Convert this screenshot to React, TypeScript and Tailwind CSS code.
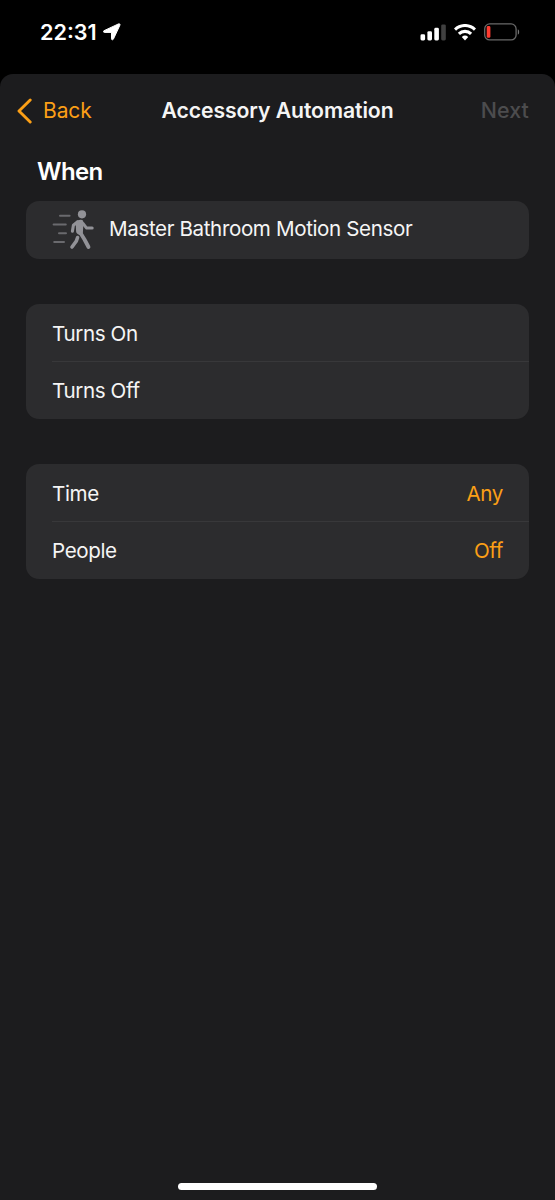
import React from "react";

function StatusBar() {
  return (
    <header className="flex h-[74px] shrink-0 items-start justify-between pl-[40px] pr-[35px] pt-[19px] text-white">
      <div className="flex h-[26px] items-center">
        <span className="w-[63px] whitespace-nowrap text-[21.6px] font-semibold leading-[26px] tracking-[0px]">22:31</span>
        <svg className="h-[18px] w-[18px]" viewBox="0 0 18 18" fill="currentColor" stroke="currentColor" strokeWidth="1" strokeLinejoin="round" aria-hidden="true">
          <path d="M1 7.7 15.5.9c1-.5 1.8.3 1.4 1.3L10.4 16.1c-.5 1.1-1.9.9-1.9-.3V9.4H1.5C.2 9.4-.1 8.2 1 7.7Z" />
        </svg>
      </div>
      <div className="flex h-[26px] items-center">
        <svg className="h-[17px] w-[26px]" viewBox="0 0 26 17" fill="currentColor" aria-hidden="true">
          <rect x="0.5" y="10.3" width="4.6" height="6.2" rx="1.4" />
          <rect x="7.4" y="7.2" width="4.6" height="9.3" rx="1.4" />
          <rect x="14.3" y="3.8" width="4.6" height="12.7" rx="1.4" />
          <rect x="21.2" y="0.4" width="4.6" height="16.1" rx="1.4" fill="#404040" />
        </svg>
        <svg className="ml-[8px] h-[17px] w-[22px]" viewBox="0 0 22 17" fill="none" stroke="currentColor" strokeWidth="3.1" aria-hidden="true">
          <path d="M1 5.6a14.3 14.3 0 0 1 20 0" />
          <path d="M4.9 9.9a8.7 8.7 0 0 1 12.2 0" />
          <path d="M11 16.4 7.8 13.1a4.7 4.7 0 0 1 6.4 0Z" fill="currentColor" stroke="none" />
        </svg>
        <svg className="ml-[8px] h-[18px] w-[36px]" viewBox="0 0 36 18" fill="none" aria-hidden="true">
          <rect x="0.7" y="0.9" width="31.4" height="16" rx="5" stroke="#696969" strokeWidth="1.3" />
          <rect x="2.7" y="3" width="3.7" height="11.8" rx="1.4" fill="#ff3b30" />
          <path d="M33.8 6.2c1.8.7 1.8 4.8 0 5.5Z" fill="#777" />
        </svg>
      </div>
    </header>
  );
}

function MotionIcon() {
  return (
    <svg className="h-[40px] w-[42px]" viewBox="0 0 42 40" fill="none" stroke="#929297" strokeLinecap="round" strokeLinejoin="round" aria-hidden="true">
      <g stroke="#6a6a6e" strokeWidth="2">
        <path d="M8 5.7H17.6M1.6 14.4H13.8M7 23.2H14M2.2 32H12" />
      </g>
      <circle cx="30" cy="4.3" r="4.1" fill="#929297" stroke="none" />
      <path d="M26.3 12.8 28.9 12.4 28.3 22.5 26.7 21.5Z" strokeWidth="5.2" />
      <path d="M25.4 11.9 21.4 15.3 20.4 21.3" strokeWidth="3.1" />
      <path d="M31 13.5 34.6 18.1H40.2" strokeWidth="3" />
      <path d="M28.5 23 32.5 29.5 36.5 37" strokeWidth="3.8" />
      <path d="M25.6 27.5 24.2 31.3 20 37" strokeWidth="3.6" />
    </svg>
  );
}

function Row({ label, value, divided = false }: { label: string; value?: string; divided?: boolean }) {
  return (
    <div className={divided ? "ml-[26px] flex h-[58px] flex-col border-t border-[#38383a]" : "ml-[26px] flex h-[57px] flex-col pt-[3px]"}>
      <div className="flex flex-1 items-center justify-between pr-[26px]">
        <span>{label}</span>
        {value && <span className="text-[#fb9f16]">{value}</span>}
      </div>
    </div>
  );
}

export default function App() {
  return (
    <div className="flex h-[1200px] w-[555px] flex-col overflow-hidden bg-black font-[Inter,sans-serif] text-[20.6px] leading-[26px] tracking-[-0.38px] text-[#f5f5f5]">
      <StatusBar />
      <main className="flex flex-1 flex-col rounded-t-[13px] bg-[#1c1c1e]">
        <nav className="grid h-[73px] grid-cols-[1fr_auto_1fr] items-center px-[17px]">
          <button className="flex items-center text-[21px] tracking-[-0.1px] text-[#fb9f16]">
            <svg className="mr-[11px] h-[26px] w-[15px]" viewBox="0 0 15 26" fill="none" stroke="currentColor" strokeWidth="2.9" strokeLinecap="round" strokeLinejoin="round" aria-hidden="true">
              <path d="M13.2 2 2 13l11.2 11" />
            </svg>
            <span>Back</span>
          </button>
          <h1 className="mb-[2px] text-[21.2px] font-semibold tracking-[-0.08px]">Accessory Automation</h1>
          <button className="mb-[2px] mr-[9px] text-right text-[21.4px] font-medium tracking-[0.1px] text-[#4c4c4e]">Next</button>
        </nav>
        <h2 className="ml-[37px] mt-[9px] h-[32px] text-[24px] font-semibold leading-[32px] tracking-[-0.6px] text-white">When</h2>
        <section className="mx-[26px] mt-[13px] flex h-[58px] items-center rounded-[13px] bg-[#2c2c2e] pl-[26px]">
          <MotionIcon />
          <span className="mb-[3px] ml-[15px]">Master Bathroom Motion Sensor</span>
        </section>
        <section className="mx-[26px] mt-[45px] rounded-[13px] bg-[#2c2c2e]">
          <Row label="Turns On" />
          <Row label="Turns Off" divided />
        </section>
        <section className="mx-[26px] mt-[45px] rounded-[13px] bg-[#2c2c2e]">
          <Row label="Time" value="Any" />
          <Row label="People" value="Off" divided />
        </section>
        <div className="mx-auto mb-[10px] mt-auto h-[7px] w-[199px] rounded-full bg-white" />
      </main>
    </div>
  );
}
